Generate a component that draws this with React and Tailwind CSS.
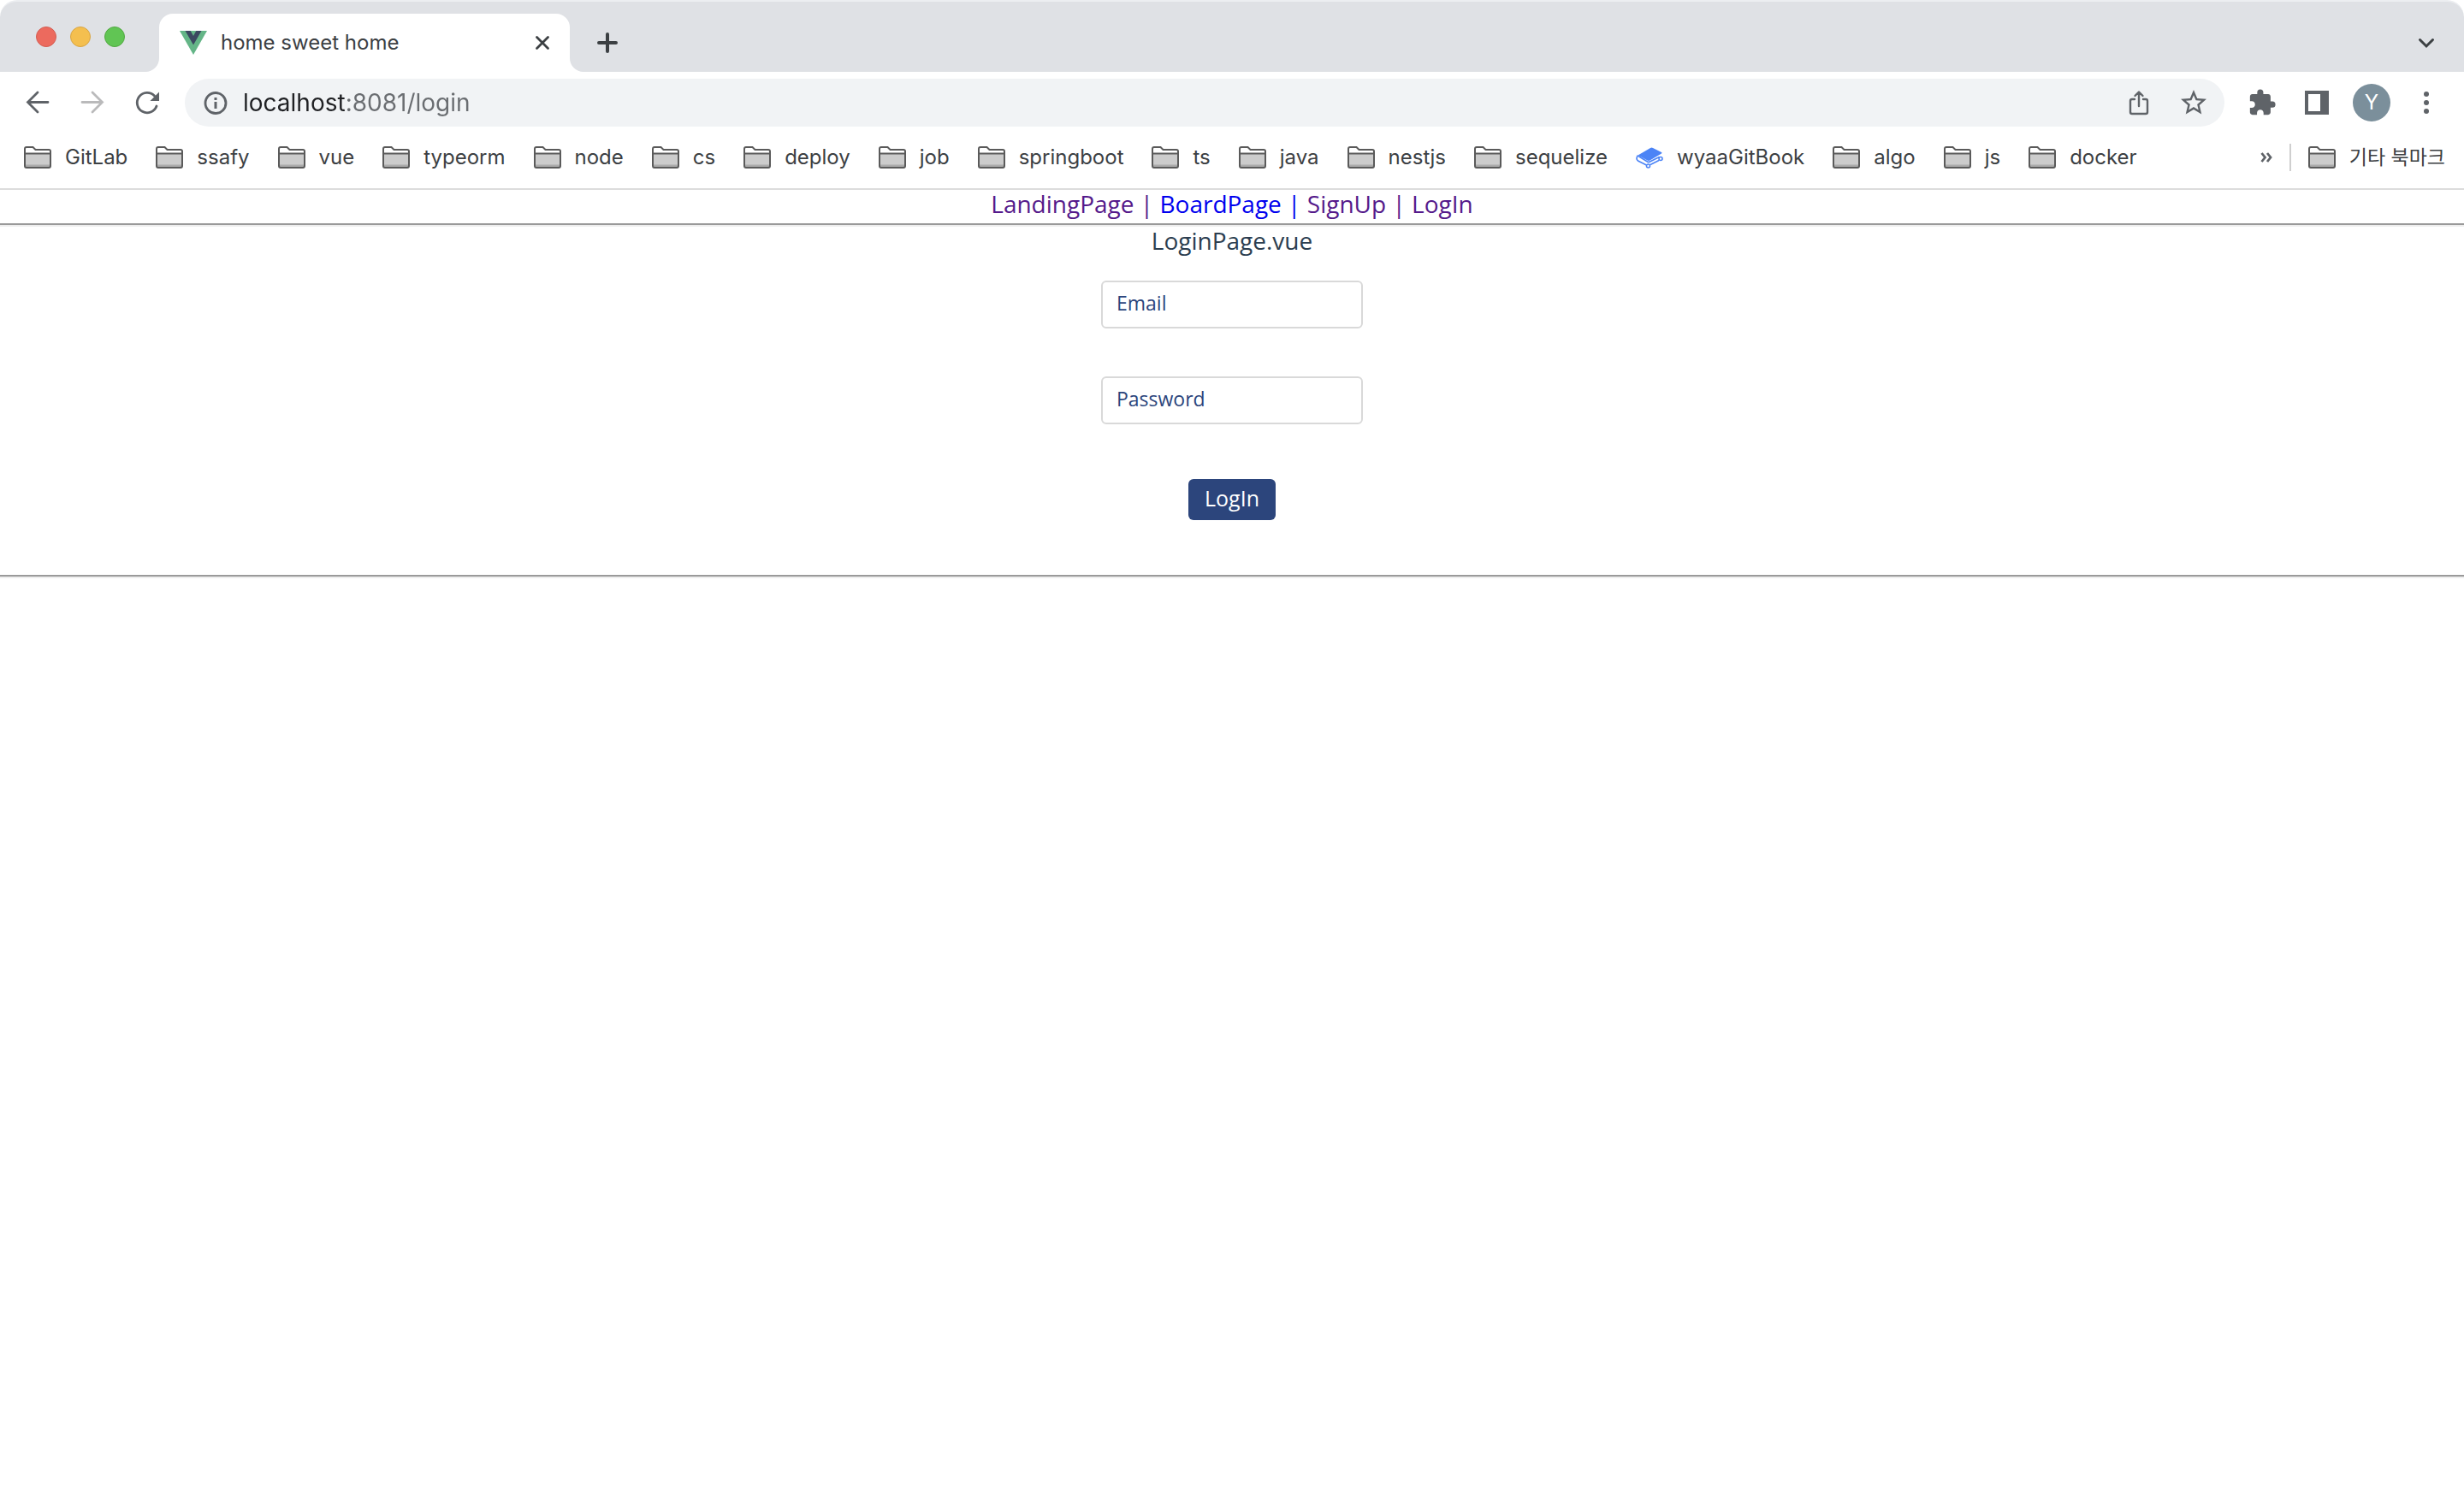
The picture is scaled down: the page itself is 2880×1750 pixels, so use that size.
import { useState } from "react";
import { MdExtension, MdStarBorder } from "react-icons/md";

const bookmarks = [
  "GitLab", "ssafy", "vue", "typeorm", "node", "cs", "deploy", "job", "springboot",
  "ts", "java", "nestjs", "sequelize", "wyaaGitBook", "algo", "js", "docker",
];

function FolderIcon() {
  return (
    <svg className="h-[26px] w-8 shrink-0" viewBox="0 0 32 26" aria-hidden="true">
      <path d="M1 23V3q0-2 2-2h7.500l3 3H29q2 0 2 2v17q0 2-2 2H3q-2 0-2-2z" fill="#fff" />
      <path d="M1 8.500h30V24H1z" fill="#ccc" />
      <path d="M2 21.500h28V24H2z" fill="#aaa" />
      <path d="M1 23V3q0-2 2-2h7.500l3 3H29q2 0 2 2v17q0 2-2 2H3q-2 0-2-2zM1 8.500h30" fill="none" stroke="#5a5a5a" strokeWidth="2" />
    </svg>
  );
}

function GitBookIcon() {
  return (
    <svg className="h-[26px] w-8 shrink-0" viewBox="0 0 32 26" fill="none" aria-hidden="true">
      <path d="M2.500 10.500L17 2q1.500-.8 3 0l10 5q1.200.8 0 1.600L16.500 16.500q-1.500.8-3 0z" fill="#4c84f6" />
      <path d="M2.500 10.500Q-.5 14.500 2.500 17l10 5M17 21.500l10-5M3 11.500l10.500 6.500q1.500.8 3 0L27.500 12.500" stroke="#4c84f6" strokeWidth="1.600" />
      <circle cx="14.500" cy="23" r="2" stroke="#4c84f6" strokeWidth="1.600" fill="#fff" />
      <circle cx="29" cy="14.500" r="2" stroke="#4c84f6" strokeWidth="1.600" fill="#fff" />
    </svg>
  );
}

function IconButton({ label, children }) {
  return (
    <button type="button" aria-label={label} className="flex size-12 shrink-0 items-center justify-center rounded-full text-[#5f6368]">
      {children}
    </button>
  );
}

function Bookmark({ name }) {
  return (
    <button type="button" className="flex shrink-0 items-center gap-4 whitespace-nowrap">
      {name === "wyaaGitBook" ? <GitBookIcon /> : <FolderIcon />}
      {name}
    </button>
  );
}

function TabStrip() {
  return (
    <div className="flex h-[84px] items-center rounded-t-[20px] border-t-2 border-[#eceef1] bg-[#dfe1e5] pr-5 pl-[42px] text-[#3c4043]">
      <div className="flex gap-4">
        <button type="button" aria-label="Close window" className="size-6 rounded-full border border-[#d35e53] bg-[#ec6a5e]" />
        <button type="button" aria-label="Minimize window" className="size-6 rounded-full border border-[#d8a545] bg-[#f4bf4f]" />
        <button type="button" aria-label="Zoom window" className="size-6 rounded-full border border-[#52a842] bg-[#61c554]" />
      </div>
      <div className="relative ml-10 flex h-[68px] w-[480px] items-center self-end rounded-t-[16px] bg-white pr-4 pl-6">
        <svg className="absolute bottom-0 -left-4 size-4" viewBox="0 0 16 16" aria-hidden="true"><path d="M16 0v16H0A16 16 0 0 0 16 0z" fill="#fff" /></svg>
        <svg className="absolute -right-4 bottom-0 size-4" viewBox="0 0 16 16" aria-hidden="true"><path d="M0 0v16h16A16 16 0 0 1 0 0z" fill="#fff" /></svg>
        <svg className="h-7 w-8" viewBox="0 0 32 28" aria-hidden="true">
          <path d="M0 0h32L16 28z" fill="#64b587" />
          <path d="M6.500 0h6.200L16 6l3.300-6h6.200L16 16.500z" fill="#3b4860" />
        </svg>
        <span className="ml-4 flex-1 text-[24px] leading-8">home sweet home</span>
        <button type="button" aria-label="Close tab" className="flex size-8 items-center justify-center">
          <svg className="size-5" viewBox="0 0 20 20" fill="none" stroke="currentColor" strokeWidth="2.800" strokeLinecap="round"><path d="M3.500 3.500l13 13M16.500 3.500l-13 13" /></svg>
        </button>
      </div>
      <button type="button" aria-label="New tab" className="ml-4 flex h-[68px] w-14 items-center justify-center self-end">
        <svg className="size-6" viewBox="0 0 24 24" fill="none" stroke="currentColor" strokeWidth="4" strokeLinecap="round"><path d="M12 2v20M2 12h20" /></svg>
      </button>
      <button type="button" aria-label="Search tabs" className="ml-auto flex h-[68px] w-12 items-center justify-center self-end">
        <svg className="size-5" viewBox="0 0 20 20" fill="none" stroke="currentColor" strokeWidth="3" strokeLinecap="round"><path d="M2.500 6.500l7.500 7.500 7.500-7.500" /></svg>
      </button>
    </div>
  );
}

function Toolbar() {
  const [url, setUrl] = useState("localhost:8081/login");
  return (
    <div className="flex h-[72px] items-center px-5">
      <div className="flex gap-4">
        <IconButton label="Back">
          <svg className="size-8" viewBox="0 0 32 32" fill="none" stroke="currentColor" strokeWidth="2.800" strokeLinecap="round"><path d="M28 15.500H4.500M16 4L4.500 15.500 16 27" /></svg>
        </IconButton>
        <IconButton label="Forward">
          <svg className="size-8" viewBox="0 0 32 32" fill="none" stroke="#bababb" strokeWidth="2.800" strokeLinecap="round"><path d="M4 15.500h23.500M16 4l11.500 11.500L16 27" /></svg>
        </IconButton>
        <IconButton label="Reload">
          <svg className="size-8" viewBox="0 0 32 32" fill="none" stroke="currentColor" strokeWidth="2.800" strokeLinecap="round">
            <path d="M27 20A11.700 11.700 0 1 1 24.500 8" />
            <path d="M30 3.500V14H19.500z" fill="currentColor" stroke="none" />
          </svg>
        </IconButton>
      </div>
      <div className="ml-5 flex h-14 flex-1 items-center rounded-full bg-[#f1f3f5] pr-3 pl-[22px]">
        <button type="button" aria-label="View site information" className="text-[#5f6368]">
          <svg className="size-7" viewBox="0 0 28 28" fill="none" stroke="currentColor" strokeWidth="2.800">
            <circle cx="14" cy="14.500" r="12" />
            <path d="M14 13v8M14 8v3" strokeWidth="3" />
          </svg>
        </button>
        <input
          aria-label="Address"
          spellCheck={false}
          value={url}
          onChange={(e) => setUrl(e.target.value)}
          className="ml-[18px] h-12 min-w-0 flex-1 bg-[linear-gradient(to_right,#202124_121px,#6a6d71_121px)] bg-clip-text text-[28px] text-transparent caret-black outline-none"
        />
        <div className="flex gap-4">
          <IconButton label="Share">
            <svg className="size-8" viewBox="0 0 32 32" fill="none" stroke="currentColor" strokeWidth="2.400" strokeLinecap="round">
              <path d="M11 12H8q-2 0-2 2v13q0 2 2 2h16q2 0 2-2V14q0-2-2-2h-3M16 20V4M11.500 8L16 3.500 20.500 8" strokeLinejoin="round" />
            </svg>
          </IconButton>
          <IconButton label="Bookmark this tab"><MdStarBorder className="size-9" /></IconButton>
        </div>
      </div>
      <div className="ml-5 flex gap-4">
        <IconButton label="Extensions"><MdExtension className="size-[34px]" /></IconButton>
        <IconButton label="Side panel">
          <svg className="size-7" viewBox="0 0 28 28" aria-hidden="true"><path d="M0 0h28v28H0zM4 4v20h14V4z" fill="currentColor" fillRule="evenodd" /></svg>
        </IconButton>
        <IconButton label="Profile">
          <span className="flex size-11 items-center justify-center rounded-full bg-[#7b8f9b] text-[24px] text-white">Y</span>
        </IconButton>
        <IconButton label="Menu">
          <svg className="size-8" viewBox="0 0 32 32" fill="currentColor"><circle cx="16" cy="6" r="3" /><circle cx="16" cy="16" r="3" /><circle cx="16" cy="26" r="3" /></svg>
        </IconButton>
      </div>
    </div>
  );
}

function BookmarksBar() {
  return (
    <div className="mb-2 flex h-14 items-center pr-[22px] pl-7 text-[24px] leading-8 text-[#3c4043]">
      <div className="flex gap-[33px]">
        {bookmarks.map((name) => <Bookmark key={name} name={name} />)}
      </div>
      <button type="button" aria-label="More bookmarks" className="ml-auto flex h-8 items-center text-[#5f6368]">
        <svg className="h-4 w-3.5" viewBox="0 0 14 16" fill="none" stroke="currentColor" strokeWidth="2.800"><path d="M1.500 3l4 5-4 5M8 3l4 5-4 5" /></svg>
      </button>
      <span className="mr-5 ml-5 h-8 w-0.5 bg-[#cfcfcf]" />
      <div className="text-[23px]">
        <Bookmark name="기타 북마크" />
      </div>
    </div>
  );
}

function Rule() {
  return <hr className="h-1 border-t-2 border-b-2 border-t-[#9a9a9a] border-b-[#eeeeee]" />;
}

function LoginPage() {
  const [form, setForm] = useState({ email: "", password: "" });
  const field = "h-14 w-[306px] rounded-[6px] border-2 border-[#d9d9d9] px-4 pb-1 text-[23px] text-[#2c457c] placeholder-[#2c457c] outline-none";
  return (
    <main className="text-center font-['Open_Sans',sans-serif] text-[28px] leading-8 text-[#2c3e50]">
      <nav className="pb-[7px] whitespace-pre text-[#551a8b]">
        <a href="#landing">LandingPage | </a>
        <a href="#board" className="text-[#0000ee]">BoardPage | </a>
        <a href="#signup">SignUp | </a>
        <a href="#login">LogIn</a>
      </nav>
      <Rule />
      <h1>LoginPage.vue</h1>
      <form className="flex flex-col items-center pt-[31px] pb-16" onSubmit={(e) => e.preventDefault()}>
        <input type="email" aria-label="Email" placeholder="Email" className={field} value={form.email} onChange={(e) => setForm({ ...form, email: e.target.value })} />
        <input type="password" aria-label="Password" placeholder="Password" className={`mt-14 ${field}`} value={form.password} onChange={(e) => setForm({ ...form, password: e.target.value })} />
        <button type="submit" className="mt-16 flex h-12 items-center rounded-[6px] bg-[#2c457c] px-[19px] pb-1 text-[25px] text-white">LogIn</button>
      </form>
      <Rule />
    </main>
  );
}

export default function App() {
  return (
    <div className="min-h-screen bg-white">
      <header className="border-b-2 border-[#dcdcdc] font-[Inter,'Noto_Sans_CJK_KR',sans-serif]">
        <TabStrip />
        <Toolbar />
        <BookmarksBar />
      </header>
      <LoginPage />
    </div>
  );
}
